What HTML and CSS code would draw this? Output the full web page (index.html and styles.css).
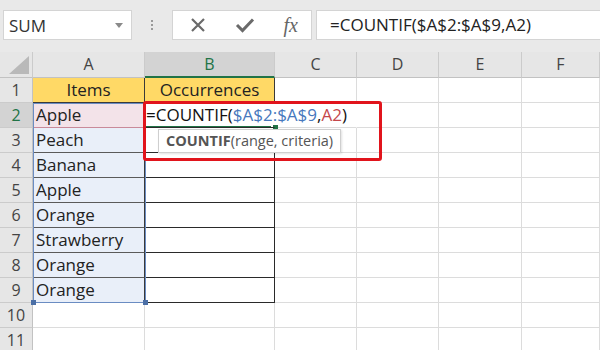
FILE: index.html
```html
<!DOCTYPE html>
<html>
<head>
<meta charset="utf-8">
<link rel="stylesheet" href="styles.css">
</head>
<body>
<div class="app">
  <div class="toolbar">
    <div class="namebox">
      <span class="name">SUM</span>
      <svg class="arrow" width="8" height="5" viewBox="0 0 8 5"><path d="M0 0 L8 0 L4 5 Z" fill="#8a8a8a"/></svg>
    </div>
    <div class="grip"><i></i><i></i><i></i></div>
    <div class="fxbox">
      <svg width="18" height="18" viewBox="0 0 18 18"><path d="M3 3 L15 15 M15 3 L3 15" stroke="#6a6a6a" stroke-width="2.2" fill="none"/></svg>
      <svg width="20" height="18" viewBox="0 0 20 18"><path d="M2 9 L7.5 14.5 L18 3.5" stroke="#6a6a6a" stroke-width="3" fill="none"/></svg>
      <span class="fx">fx</span>
    </div>
    <div class="formula">=COUNTIF($A$2:$A$9,A2)</div>
  </div>

  <div class="sheet">
    <div class="h corner"><svg width="20" height="18" viewBox="0 0 20 18"><path d="M20 0 L20 18 L0 18 Z" fill="#b9b9b9"/></svg></div>
    <div class="h">A</div>
    <div class="h act">B</div>
    <div class="h">C</div>
    <div class="h">D</div>
    <div class="h">E</div>
    <div class="h">F</div>

    <div class="r">1</div>
    <div class="c t hd">Items</div>
    <div class="c t hd">Occurrences</div>
    <div class="c"></div><div class="c"></div><div class="c"></div><div class="c"></div>

    <div class="r act">2</div>
    <div class="c ta pink">Apple</div>
    <div class="c tb edit"><span class="ftext">=COUNTIF(<span class="blue">$A$2:$A$9</span>,<span class="red">A2</span>)</span></div>
    <div class="c nob"></div><div class="c"></div><div class="c"></div><div class="c"></div>

    <div class="r">3</div>
    <div class="c ta">Peach</div>
    <div class="c tb"></div>
    <div class="c"></div><div class="c"></div><div class="c"></div><div class="c"></div>

    <div class="r">4</div>
    <div class="c ta">Banana</div>
    <div class="c tb"></div>
    <div class="c"></div><div class="c"></div><div class="c"></div><div class="c"></div>

    <div class="r">5</div>
    <div class="c ta">Apple</div>
    <div class="c tb"></div>
    <div class="c"></div><div class="c"></div><div class="c"></div><div class="c"></div>

    <div class="r">6</div>
    <div class="c ta">Orange</div>
    <div class="c tb"></div>
    <div class="c"></div><div class="c"></div><div class="c"></div><div class="c"></div>

    <div class="r">7</div>
    <div class="c ta">Strawberry</div>
    <div class="c tb"></div>
    <div class="c"></div><div class="c"></div><div class="c"></div><div class="c"></div>

    <div class="r">8</div>
    <div class="c ta">Orange</div>
    <div class="c tb"></div>
    <div class="c"></div><div class="c"></div><div class="c"></div><div class="c"></div>

    <div class="r">9</div>
    <div class="c ta">Orange</div>
    <div class="c tb"></div>
    <div class="c"></div><div class="c"></div><div class="c"></div><div class="c"></div>

    <div class="r">10</div>
    <div class="c"></div><div class="c"></div><div class="c"></div><div class="c"></div><div class="c"></div><div class="c"></div>

    <div class="r">11</div>
    <div class="c"></div><div class="c"></div><div class="c"></div><div class="c"></div><div class="c"></div><div class="c"></div>

    <div class="range"><i class="q bl"></i><i class="q br"></i></div>
    <div class="active-line"></div>
    <div class="handle"></div>
    <div class="tip"><b>COUNTIF</b>(range, criteria)</div>
    <div class="redbox"></div>
  </div>
</div>
</body>
</html>
```

FILE: styles.css
```css
* { box-sizing: border-box; }
html, body { margin: 0; padding: 0; }
body {
  width: 600px;
  height: 350px;
  overflow: hidden;
  background: #fff;
  font-family: "Open Sans", "Noto Sans", sans-serif;
  color: #222;
}
.app { width: 600px; height: 350px; overflow: hidden; }

.toolbar {
  height: 52px;
  background: #e9e9e9;
  display: flex;
  align-items: flex-start;
  padding-top: 10px;
}
.namebox {
  margin-left: 3px;
  width: 129px;
  height: 30px;
  background: #fff;
  border: 1px solid #d4d4d4;
  display: flex;
  align-items: center;
  justify-content: space-between;
  padding: 0 8px 0 5px;
}
.name { font-size: 17px; color: #333; }
.grip {
  width: 40px;
  height: 30px;
  display: flex;
  flex-direction: column;
  align-items: center;
  justify-content: center;
  gap: 2px;
}
.grip i { display: block; width: 2px; height: 2px; background: #9a9a9a; }
.fxbox {
  width: 140px;
  height: 30px;
  background: #fff;
  border: 1px solid #d4d4d4;
  display: flex;
  align-items: center;
  justify-content: space-between;
  padding: 0 13px 0 16px;
}
.fx {
  font-family: "Liberation Serif", serif;
  font-style: italic;
  font-size: 20px;
  color: #666;
  line-height: 1;
}
.formula {
  flex: 1;
  margin-left: 4px;
  height: 30px;
  background: #fff;
  border: 1px solid #d4d4d4;
  border-right: none;
  font-size: 17px;
  color: #222;
  line-height: 28px;
  padding-left: 13px;
}

.sheet {
  position: relative;
  display: grid;
  grid-template-columns: 33px 112px 130px 82px 82px 83px 78px;
  grid-template-rows: 26px repeat(11, 25px);
  font-size: 17px;
}
.h {
  background: #e6e6e6;
  border-right: 1px solid #cbcbcb;
  border-bottom: 1px solid #c2c2c2;
  color: #444;
  text-align: center;
  line-height: 25px;
  font-size: 16px;
}
.h.act {
  background: #d3d3d3;
  color: #217346;
  border-bottom: 2px solid #217346;
}
.corner { display: flex; align-items: flex-end; justify-content: flex-end; padding: 0 3px 3px 0; }
.r {
  background: #e6e6e6;
  border-right: 1px solid #c2c2c2;
  border-bottom: 1px solid #cbcbcb;
  color: #444;
  text-align: center;
  line-height: 24px;
  font-size: 16px;
}
.r.act { background: #d3d3d3; color: #217346; }
.c {
  border-right: 1px solid #dcdcdc;
  border-bottom: 1px solid #dcdcdc;
  line-height: 24px;
  padding-left: 3px;
  white-space: nowrap;
}
.t { border-right: 1px solid #3a3a3a; border-bottom: 1px solid #3a3a3a; }
.hd { background: #ffd966; text-align: center; padding-left: 0; color: #222; }
.ta { background: #e9eff9; border-bottom: 1px solid #5a5a5a; border-right: 1px solid #3a3a3a; }
.ta.pink { background: #f3e3e9; border-bottom: 1px solid #c98a9a; }
.tb { border-bottom: 1px solid #2a2a2a; border-right: 1px solid #2a2a2a; }
.edit { border-right-color: transparent; overflow: visible; position: relative; z-index: 1; padding-left: 1px; }
.nob { border-right-color: transparent; }
.ftext { font-size: 17px; color: #111; }
.blue { color: #4678bd; }
.red { color: #c4474b; }

.range {
  position: absolute;
  left: 33px;
  top: 51px;
  width: 113px;
  height: 200px;
  border: 1.5px solid #6a8cc2;
}
.q { position: absolute; width: 5px; height: 5px; background: #4b6fa6; }
.q.bl { left: -3px; bottom: -3px; }
.q.br { right: -3px; bottom: -3px; }
.active-line {
  position: absolute;
  left: 145px;
  top: 74px;
  width: 126px;
  height: 2px;
  background: #217346;
}
.handle {
  position: absolute;
  left: 273px;
  top: 73px;
  width: 5px;
  height: 5px;
  background: #217346;
}
.tip {
  position: absolute;
  left: 158px;
  top: 77px;
  width: 183px;
  height: 24px;
  background: #fff;
  border: 1px solid #cfcfcf;
  box-shadow: 1px 1px 2px rgba(0,0,0,0.12);
  font-size: 14.5px;
  color: #555;
  line-height: 22px;
  padding-left: 7px;
  white-space: nowrap;
  z-index: 2;
}
.tip b { font-weight: 700; color: #555; }
.redbox {
  position: absolute;
  left: 143px;
  top: 49px;
  width: 239px;
  height: 60px;
  border: 3px solid #e1141c;
  border-radius: 3px;
  z-index: 3;
}
```
